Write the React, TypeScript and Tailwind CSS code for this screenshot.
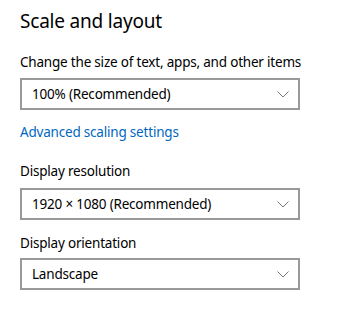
import React from "react";

function Chevron() {
  return (
    <svg width="12" height="7" viewBox="0 0 12 7" fill="none">
      <path d="M0.5 0.5 L6 6 L11.5 0.5" stroke="#777777" strokeWidth="1" />
    </svg>
  );
}

function Dropdown({ value }: { value: string }) {
  return (
    <div className="w-[280px] h-[32px] border-2 border-[#999999] flex items-center justify-between pl-[10px] pr-[9px] text-[13.5px] tracking-[-0.2px] text-black">
      <span>{value}</span>
      <Chevron />
    </div>
  );
}

export default function App() {
  return (
    <div className="w-[343px] h-[324px] bg-white pl-5 font-['Noto_Sans',sans-serif] text-black">
      <div className="text-[19px] tracking-[-0.2px] leading-[28px] pt-[7px]">Scale and layout</div>
      <div className="text-[13.5px] tracking-[-0.2px] leading-[20px] mt-[17px]">Change the size of text, apps, and other items</div>
      <div className="mt-[6px]">
        <Dropdown value="100% (Recommended)" />
      </div>
      <div className="text-[13.5px] tracking-[-0.2px] leading-[20px] mt-[12px] text-[#0067c0]">Advanced scaling settings</div>
      <div className="text-[13.5px] tracking-[-0.2px] leading-[20px] mt-[19px]">Display resolution</div>
      <div className="mt-[7px]">
        <Dropdown value="1920 × 1080 (Recommended)" />
      </div>
      <div className="text-[13.5px] tracking-[-0.2px] leading-[20px] mt-[13px]">Display orientation</div>
      <div className="mt-[5px]">
        <Dropdown value="Landscape" />
      </div>
    </div>
  );
}
